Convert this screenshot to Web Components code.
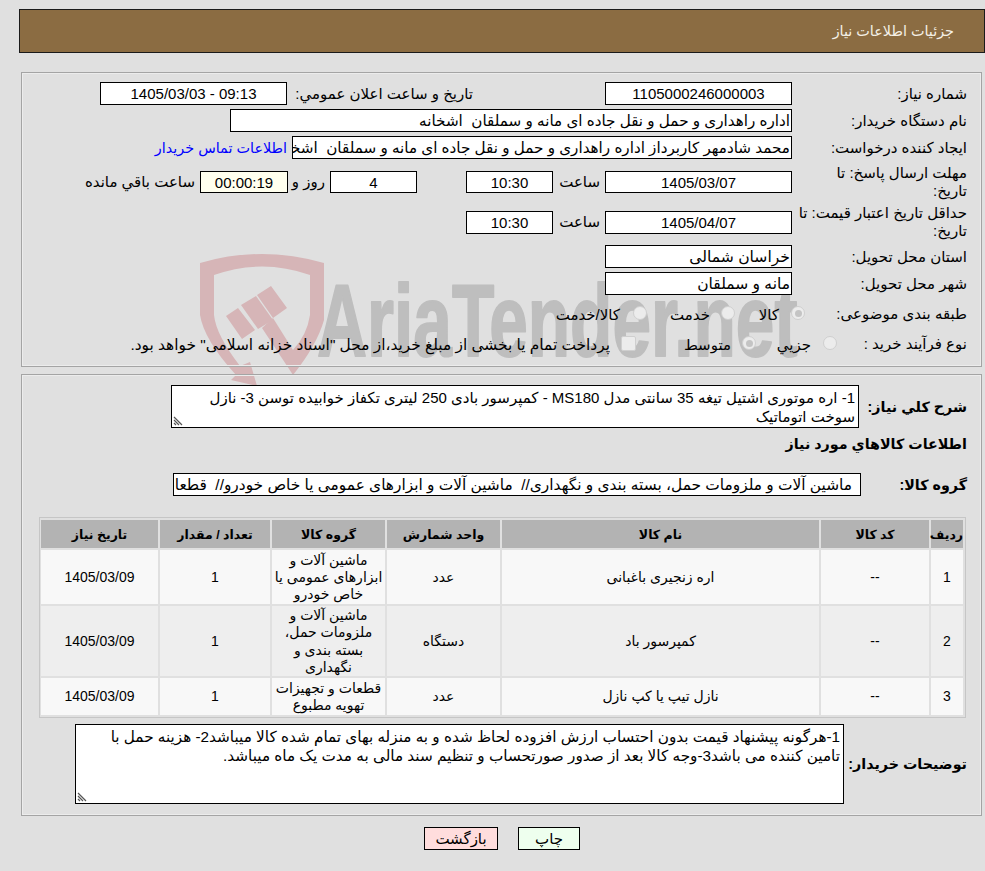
<!DOCTYPE html>
<html lang="fa" dir="rtl">
<head>
<meta charset="utf-8">
<title>جزئیات اطلاعات نیاز</title>
<style>
html,body{margin:0;padding:0;background:#e0e0e0;}
body{font-family:"Liberation Sans","DejaVu Sans",sans-serif;font-size:15px;color:#000;width:985px;height:871px;overflow:hidden;position:relative;}
</style>
</head>
<body>
<ar-watermark></ar-watermark>
<ar-page>
  <ar-header>جزئیات اطلاعات نیاز</ar-header>
  <ar-panel style="--pt:9px;--h:295px;--mt:19px">
    <ar-row label="شماره نیاز:">
      <ar-box w="187" center>1105000246000003</ar-box>
      <ar-text w="180" style="margin-right:132px">تاریخ و ساعت اعلان عمومي:</ar-text>
      <ar-box w="187" center style="margin-right:6px">09:13 - 1405/03/03</ar-box>
    </ar-row>
    <ar-row label="نام دستگاه خریدار:">
      <ar-box w="562" style="font-size:15.2px">اداره راهداری و حمل و نقل جاده ای مانه و سملقان  اشخانه</ar-box>
    </ar-row>
    <ar-row label="ایجاد کننده درخواست:">
      <ar-box w="500" style="font-size:15.2px">محمد شادمهر کاربرداز اداره راهداری و حمل و نقل جاده ای مانه و سملقان  اشخانه</ar-box>
      <ar-text style="margin-right:5px;color:#0000ff;font-size:14.4px">اطلاعات تماس خریدار</ar-text>
    </ar-row>
    <ar-row label="مهلت ارسال پاسخ: تا&lt;br&gt;تاریخ:" h="37">
      <ar-box w="187" center h="22">1405/03/07</ar-box>
      <ar-text w="47" style="margin-right:5px">ساعت</ar-text>
      <ar-box w="87" center h="22">10:30</ar-box>
      <ar-box w="87" center h="22" style="margin-right:49px">4</ar-box>
      <ar-text w="29" style="margin-right:5px">روز و</ar-text>
      <ar-box w="88" center h="22" bg="#ffffee" style="margin-right:8px">00:00:19</ar-box>
      <ar-text style="margin-right:5px">ساعت باقي مانده</ar-text>
    </ar-row>
    <ar-row label="حداقل تاریخ اعتبار قیمت: تا&lt;br&gt;تاریخ:" h="35" style="margin-bottom:5px">
      <ar-box w="187" center>1405/04/07</ar-box>
      <ar-text w="47" style="margin-right:5px">ساعت</ar-text>
      <ar-box w="87" center>10:30</ar-box>
    </ar-row>
    <ar-row label="استان محل تحویل:">
      <ar-box w="187" style="font-size:15.6px">خراسان شمالی</ar-box>
    </ar-row>
    <ar-row label="شهر محل تحویل:">
      <ar-box w="187" style="font-size:15.5px">مانه و سملقان</ar-box>
    </ar-row>
    <ar-row label="طبقه بندی موضوعی:" h="30" lw="176" style="margin-bottom:0">
      <ar-choice kind="radio" checked w="70" gap="12">کالا</ar-choice>
      <ar-choice kind="radio" w="88" gap="11">خدمت</ar-choice>
      <ar-choice kind="radio" gap="13">کالا/خدمت</ar-choice>
    </ar-row>
    <ar-row label="نوع فرآیند خرید :" h="30" lw="144">
      <ar-choice kind="radio" w="81" gap="12">جزیي</ar-choice>
      <ar-choice kind="radio" checked w="120" gap="11">متوسط</ar-choice>
      <ar-choice kind="check" gap="11" style="font-size:15.4px">پرداخت تمام یا بخشی از مبلغ خرید،از محل "اسناد خزانه اسلامی" خواهد بود.</ar-choice>
    </ar-row>
  </ar-panel>
  <ar-panel style="--pt:10px;--h:442px;--mt:7px">
    <ar-row label="شرح کلي نیاز:" strong h="43" lw="122">
      <ar-area w="688" h="43">1- اره موتوری اشتیل تیغه 35 سانتی مدل MS180 - کمپرسور بادی 250 لیتری تکفاز خوابیده توسن 3- نازل<br>سوخت اتوماتیک</ar-area>
    </ar-row>
    <ar-row label="اطلاعات كالاهاي مورد نیاز" strong h="24" lw="400" style="margin-top:4px"></ar-row>
    <ar-row label="گروه كالا:" strong h="23" lw="120" style="margin-top:17px">
      <ar-box w="688" pad="8" style="font-size:15.4px">ماشین آلات و ملزومات حمل، بسته بندی و نگهداری//  ماشین آلات و ابزارهای عمومی یا خاص خودرو//  قطعات و تجهیزات تهویه مطبوع</ar-box>
    </ar-row>
    <ar-items style="margin-top:21px"></ar-items>
    <ar-row label="توضیحات خریدار:" strong h="80" lw="137" style="margin-top:6px">
      <ar-area w="769" h="80" style="font-size:15.25px">1-هرگونه پیشنهاد قیمت بدون احتساب ارزش افزوده لحاظ شده و به منزله بهای تمام شده کالا میباشد2- هزینه حمل با<br>تامین کننده می باشد3-وجه کالا بعد از صدور صورتحساب و تنظیم سند مالی به مدت یک ماه میباشد.</ar-area>
    </ar-row>
  </ar-panel>
  <ar-actions>
    <ar-button bg="#eeffee" w="62">چاپ</ar-button>
    <ar-button bg="#ffdddd" w="74">بازگشت</ar-button>
  </ar-actions>
</ar-page>
<script>
function def(name, css, html, init){
  customElements.define(name, class extends HTMLElement{
    constructor(){super();this.attachShadow({mode:'open'});}
    connectedCallback(){
      this.shadowRoot.innerHTML = '<style>'+css+'</style>'+(typeof html==='function'?html(this):html);
      if(init) init(this);
    }
  });
}
def('ar-page', ':host{display:block;position:relative;z-index:1;padding:9px 0 0 0;}', '<slot></slot>');
def('ar-header', `:host{display:flex;align-items:center;box-sizing:border-box;width:966px;height:44px;margin-left:19px;
  background:#8b6c42;border:1px solid #1a1a1a;color:#f4f0e6;padding-right:30px;font-size:14.4px;}`, '<slot></slot>');
def('ar-panel', `:host{display:block;box-sizing:border-box;width:961px;height:var(--h);margin-top:var(--mt);margin-right:3px;margin-left:21px;
  border:1px solid #a4a4a4;box-shadow:inset 0 0 0 1px #ececec;padding-top:var(--pt);}
  ::slotted(ar-row){margin-bottom:4px}`, '<slot></slot>');
def('ar-row', `:host{display:flex;align-items:center;min-height:var(--rh,23px);}
  .l{box-sizing:border-box;flex:none;padding-right:14px;line-height:18px;}
  b{font-weight:bold;font-size:14.3px}
  .c{display:flex;align-items:center;flex:1;min-width:0}`,
  el=>{const s=el.hasAttribute('strong');const w=el.getAttribute('lw')||'189';
    const lab=el.getAttribute('label');
    return `<div class="l" style="width:${w}px">${s?'<b>'+lab+'</b>':lab}</div><div class="c"><slot></slot></div>`;},
  el=>{el.style.setProperty('--rh',(el.getAttribute('h')||23)+'px');});
def('ar-box', `:host{display:block;flex:none;box-sizing:border-box;border:1px solid #000;background:#fff;overflow:hidden;white-space:pre;
  line-height:21px;padding:0 1px;height:var(--bh,23px);}`, '<slot></slot>',
  el=>{el.style.width=el.getAttribute('w')+'px';
    if(el.hasAttribute('center'))el.style.textAlign='center';
    if(el.getAttribute('h'))el.style.setProperty('--bh',el.getAttribute('h')+'px');
    if(el.getAttribute('bg'))el.style.background=el.getAttribute('bg');
    if(el.getAttribute('pad'))el.style.paddingRight=el.getAttribute('pad')+'px';});
def('ar-text', `:host{display:block;flex:none;white-space:nowrap;}`, '<slot></slot>',
  el=>{if(el.getAttribute('w'))el.style.width=el.getAttribute('w')+'px';
    if(el.hasAttribute('center'))el.style.textAlign='center';});
def('ar-area', `:host{display:block;flex:none;box-sizing:border-box;border:1px solid #000;background:#fff;position:relative;line-height:19px;padding:2px 3px 0;white-space:nowrap;overflow:hidden;}
  svg{position:absolute;left:1px;bottom:1px;width:10px;height:10px}`,
  `<slot></slot><svg viewBox="0 0 10 10"><path d="M1 1 9 9M1 4 6 9M1 7 3 9" stroke="#555" stroke-width="1.2" fill="none"/></svg>`,
  el=>{el.style.width=el.getAttribute('w')+'px';el.style.height=el.getAttribute('h')+'px';});
def('ar-choice', `:host{display:flex;flex:none;align-items:center;box-sizing:border-box;white-space:nowrap;}
  .m{flex:none;box-sizing:border-box;width:14px;height:14px;background:#ececec;border:1px solid #cfcfcf;display:flex;align-items:center;justify-content:center;position:relative;top:-1px}
  .r{border-radius:50%}.k{border-radius:2px;width:15px;height:15px}
  i{display:block;width:7px;height:7px;border-radius:50%;background:#c4c4c4}
  span{position:relative;top:1px}`,
  el=>{const r=el.getAttribute('kind')==='radio';const g=el.getAttribute('gap')||11;
    return `<div class="m ${r?'r':'k'}" style="margin-left:${g}px">${el.hasAttribute('checked')?'<i></i>':''}</div><span><slot></slot></span>`;},
  el=>{if(el.getAttribute('w'))el.style.width=el.getAttribute('w')+'px';});
const ROWS=[
 ['1','--','اره زنجیری باغبانی','عدد','ماشین آلات و<br>ابزارهای عمومی یا<br>خاص خودرو','1','1405/03/09'],
 ['2','--','کمپرسور باد','دستگاه','ماشین آلات و<br>ملزومات حمل،<br>بسته بندی و<br>نگهداری','1','1405/03/09'],
 ['3','--','نازل تیپ یا کپ نازل','عدد','قطعات و تجهیزات<br>تهویه مطبوع','1','1405/03/09']];
const HEADS=['ردیف','کد کالا','نام کالا','واحد شمارش','گروه کالا','تعداد / مقدار','تاریخ نیاز'];
const WIDTHS=[32,108,317,113,113,110,117];
const HEIGHTS=[54,70,37];
def('ar-items', `:host{display:block;box-sizing:border-box;width:927px;margin-right:15px;margin-left:18px;border:1px solid #c6c6c6;font-size:14px}
  table{border-collapse:separate;border-spacing:2px;table-layout:fixed;width:925px;font:inherit}
  th{background:#b3b3b3;height:28px;padding:0;font-weight:bold;font-size:12.5px;text-align:center;white-space:nowrap}
  td{padding:1px 0 0;text-align:center;line-height:17.2px;white-space:nowrap}
  tr.o td{background:#f8f8f8}tr.e td{background:#eeeeee}`,
  `<table><colgroup>${WIDTHS.map(w=>`<col style="width:${w}px">`).join('')}</colgroup>
   <thead><tr>${HEADS.map(h=>`<th>${h}</th>`).join('')}</tr></thead>
   <tbody>${ROWS.map((r,i)=>`<tr class="${i%2?'e':'o'}" style="height:${HEIGHTS[i]}px">${r.map(c=>`<td>${c}</td>`).join('')}</tr>`).join('')}</tbody></table>`);
def('ar-actions', `:host{display:flex;gap:20px;margin-top:11px;margin-right:405px;width:156px}`, '<slot></slot>');
def('ar-button', `:host{display:flex;flex:none;box-sizing:border-box;align-items:center;justify-content:center;height:23px;border:1px solid #000;}`, '<slot></slot>',
  el=>{el.style.width=el.getAttribute('w')+'px';el.style.background=el.getAttribute('bg');});
def('ar-watermark', `:host{display:block;position:absolute;left:0;top:0;width:985px;height:871px;z-index:0;pointer-events:none}
  svg{position:absolute;left:0;top:0}`,
  `<svg width="985" height="871" viewBox="0 0 985 871">
    <path fill="#d6b5b7" d="M200 263Q262 245 324 263V320Q317 345 293 375L262 328 273 318 293 350Q307 335 310 315V275Q262 258 214 275V315Q216 335 240 366L250 362 257 386 231 380 236 375Q204 340 200 315Z"/>
    <path fill="#d6b5b7" d="M226 316 238 308 255 330 242 339ZM241 305 256 296 273 320 258 329ZM257 295 271 286 287 308 273 318Z"/>
    <text x="0" y="356" transform="translate(317 0) scale(.68 1)" font-family="Liberation Sans" font-weight="bold" font-size="102" fill="#bebebe" stroke="#bebebe" stroke-width="2" stroke-linejoin="round" direction="ltr">AriaTender.net</text>
  </svg>`);
</script>
</body>
</html>
